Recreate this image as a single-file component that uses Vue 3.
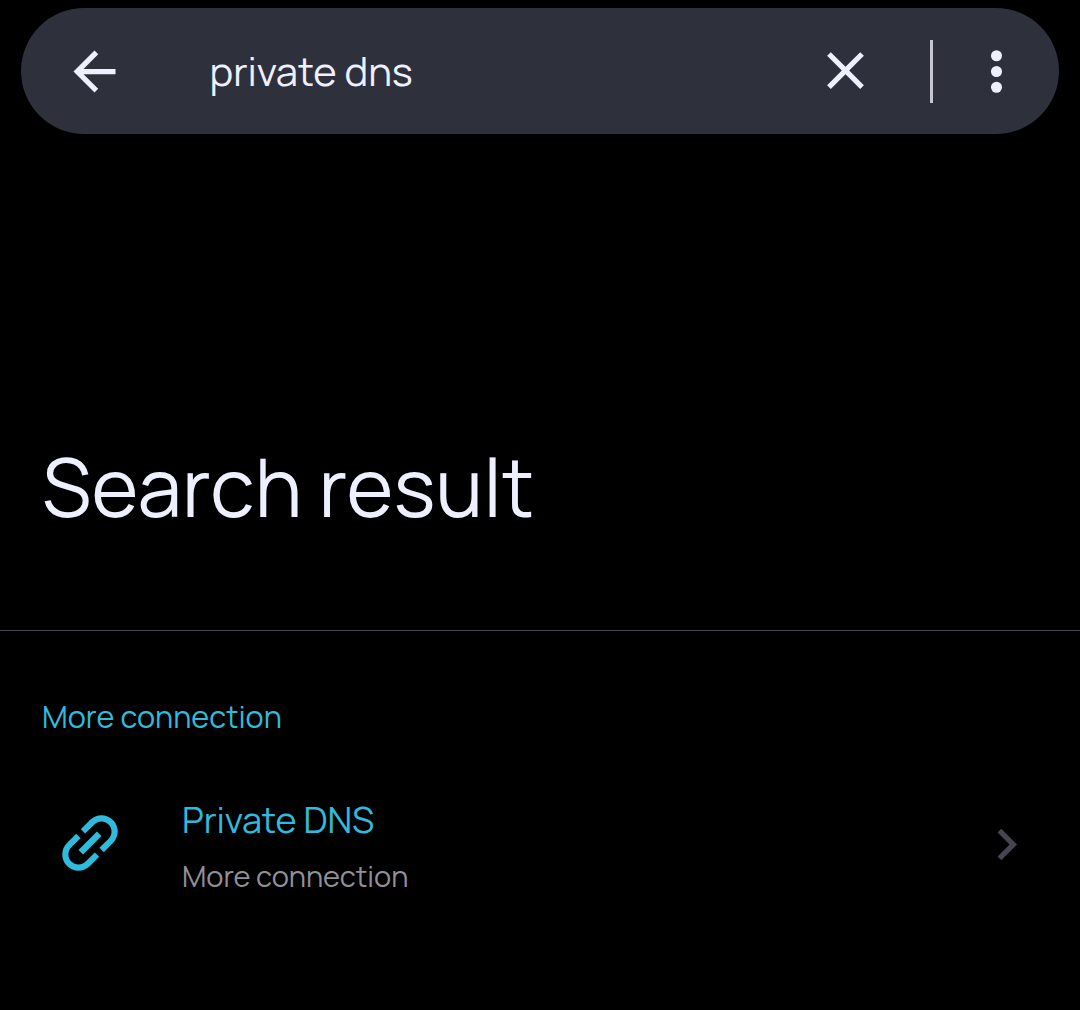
<script setup>
const query = 'private dns'
const groups = [
  { name: 'More connection', items: [{ title: 'Private DNS', summary: 'More connection' }] },
]
</script>

<template>
  <main class="screen">
    <header class="search-bar">
      <svg class="icon back" viewBox="0 0 24 24"><path d="M20 11H7.83l5.59-5.59L12 4l-8 8 8 8 1.41-1.41L7.83 13H20z" /></svg>
      <div class="query">{{ query }}</div>
      <svg class="icon clear" viewBox="0 0 24 24"><path d="M19 6.41 17.59 5 12 10.59 6.41 5 5 6.41 10.59 12 5 17.59 6.41 19 12 13.41 17.59 19 19 17.59 13.41 12z" /></svg>
      <span class="divider"></span>
      <svg class="icon more" viewBox="0 0 24 24"><circle cx="12" cy="6" r="2.1" /><circle cx="12" cy="12" r="2.1" /><circle cx="12" cy="18" r="2.1" /></svg>
    </header>
    <h1 class="title">Search result</h1>
    <section v-for="group in groups" :key="group.name" class="group">
      <h2 class="group-name">{{ group.name }}</h2>
      <div v-for="item in group.items" :key="item.title" class="row">
        <svg class="link" viewBox="0 0 24 24">
          <path transform="rotate(-45 12 12)" d="M3.9 12c0-1.71 1.39-3.1 3.1-3.1h4V7H7c-2.76 0-5 2.24-5 5s2.24 5 5 5h4v-1.9H7c-1.71 0-3.1-1.39-3.1-3.1zM8 13h8v-2H8v2zm9-6h-4v1.9h4c1.71 0 3.1 1.39 3.1 3.1s-1.39 3.1-3.1 3.1h-4V17h4c2.76 0 5-2.24 5-5s-2.24-5-5-5z" />
        </svg>
        <div class="labels">
          <div class="item-title">{{ item.title }}</div>
          <div class="summary">{{ item.summary }}</div>
        </div>
        <svg class="chevron" viewBox="0 0 24 24"><path d="M10 6 8.59 7.41 13.17 12l-4.58 4.59L10 18l6-6z" /></svg>
      </div>
    </section>
  </main>
</template>

<style>
body { margin: 0; background: #000; }
</style>

<style scoped>
.screen {
  box-sizing: border-box;
  width: 1080px;
  height: 1010px;
  padding-top: 8px;
  overflow: hidden;
  background: #000;
  color: #eef0ff;
  font-family: Manrope, Inter, sans-serif;
  font-weight: 400;
}
.search-bar {
  box-sizing: border-box;
  display: flex;
  align-items: center;
  height: 126px;
  margin: 0 21px;
  padding: 0 31px 0 41.5px;
  border-radius: 63px;
  background: #2e303b;
}
svg { display: block; flex: none; fill: currentColor; }
.icon { width: 63px; height: 63px; }
.clear { margin-bottom: 1px; }
.query {
  flex: 1;
  margin-left: 84px;
  font-size: 40px;
  line-height: 56px;
  letter-spacing: -0.05px;
  white-space: nowrap;
}
.divider {
  width: 3px;
  height: 63px;
  margin: 0 32px 0 53.5px;
  background: #c5c6d2;
}
.title {
  box-sizing: border-box;
  height: 497px;
  margin: 0;
  padding: 303px 0 0 42px;
  border-bottom: 1px solid #464652;
  font-size: 80px;
  font-weight: 400;
  line-height: 100px;
  letter-spacing: 0.12px;
  white-space: nowrap;
}
.group-name {
  margin: 0;
  padding: 65px 0 0 42px;
  color: #2fbbdc;
  font-size: 30.6px;
  font-weight: 400;
  line-height: 40px;
}
.row {
  display: flex;
  align-items: center;
  height: 126px;
  margin-top: 45px;
  padding: 0 42px 0 50.5px;
}
.link { width: 78px; height: 78px; margin-bottom: 2px; color: #2fbbdc; }
.labels { flex: 1; margin-left: 53.5px; padding-top: 8px; white-space: nowrap; }
.item-title { color: #2fbbdc; font-size: 36px; line-height: 56px; letter-spacing: -0.1px; }
.summary { color: #918f9a; font-size: 29px; line-height: 56px; letter-spacing: -0.07px; }
.chevron { width: 63px; height: 63px; color: #464652; }
</style>
